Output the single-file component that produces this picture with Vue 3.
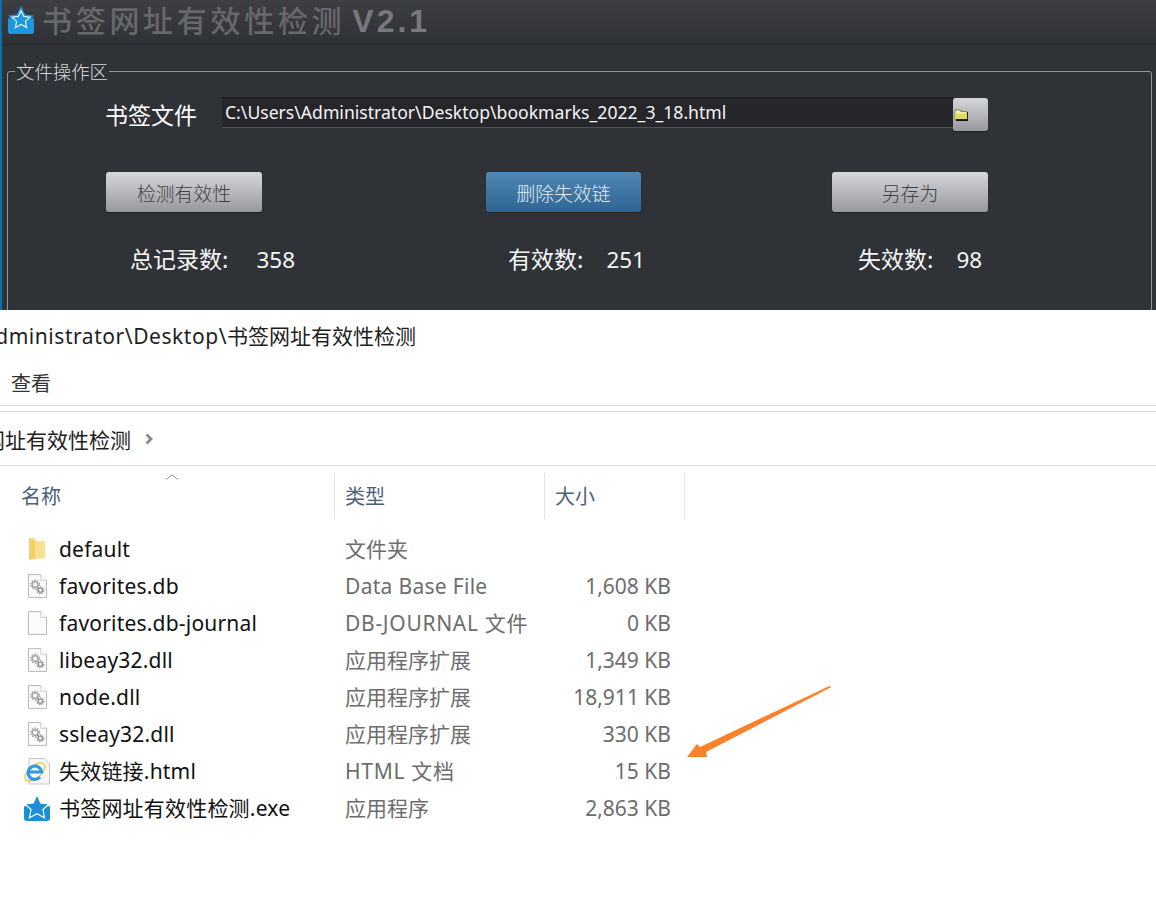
<script setup>
const files = [
  { name: 'default', type: '文件夹', size: '', icon: 'folder' },
  { name: 'favorites.db', type: 'Data Base File', size: '1,608 KB', icon: 'gear', track: 'latin' },
  { name: 'favorites.db-journal', type: 'DB-JOURNAL 文件', size: '0 KB', icon: 'blank', track: 'wide' },
  { name: 'libeay32.dll', type: '应用程序扩展', size: '1,349 KB', icon: 'gear' },
  { name: 'node.dll', type: '应用程序扩展', size: '18,911 KB', icon: 'gear' },
  { name: 'ssleay32.dll', type: '应用程序扩展', size: '330 KB', icon: 'gear' },
  { name: '失效链接.html', type: 'HTML 文档', size: '15 KB', icon: 'ie', track: 'wide' },
  { name: '书签网址有效性检测.exe', type: '应用程序', size: '2,863 KB', icon: 'star' }
]

const stats = [
  { label: '总记录数:', value: '358' },
  { label: '有效数:', value: '251' },
  { label: '失效数:', value: '98' }
]
</script>

<template>
  <div class="page">
    <section class="tool">
      <header class="title-bar">
        <svg class="app-icon" viewBox="0 0 30 30">
          <path d="M1 13h28v14a3 3 0 0 1-3 3H4a3 3 0 0 1-3-3z" fill="#1b98e0" />
          <path d="M15 0l4.500 9 9.500 1.200-7 6.400 2 9.600L15 21.500 6 26.200l2-9.600-7-6.400L10.500 9z" fill="#1b98e0" />
          <path d="M15 5l3 6.200 6.600.8-4.900 4.500 1.300 6.600-6-3.300-6 3.300 1.300-6.600L5.400 12l6.600-.8z" fill="#1b98e0" stroke="#dff1fb" stroke-width="1.300" />
        </svg>
        <h1 class="title">书签网址有效性检测<span class="version">V2.1</span></h1>
      </header>

      <fieldset class="group">
        <legend>文件操作区</legend>
        <div class="file-row">
          <label class="file-label">书签文件</label>
          <div class="file-input">C:\Users\Administrator\Desktop\bookmarks_2022_3_18.html</div>
          <button class="browse">
            <svg viewBox="0 0 16 14" width="16" height="14">
              <path d="M2 4V2.500h5L8 4h6v9H2z" fill="#111" />
              <path d="M1 3.500V2h5l1 1.500h6V11H1z" fill="#f3f3a0" stroke="#55552a" stroke-width=".6" />
              <path d="M1 5.500h12V11H1z" fill="#dede58" />
            </svg>
          </button>
        </div>
        <div class="actions">
          <button class="btn grey">检测有效性</button>
          <button class="btn blue">删除失效链</button>
          <button class="btn grey">另存为</button>
        </div>
        <div class="stats">
          <div v-for="s in stats" :key="s.label" class="stat">
            <span class="stat-label">{{ s.label }}</span>
            <span class="stat-value">{{ s.value }}</span>
          </div>
        </div>
      </fieldset>
    </section>

    <section class="explorer">
      <div class="path-bar"><span><span class="path-latin">Administrator\Desktop\</span>书签网址有效性检测</span></div>
      <div class="menu-bar">查看</div>
      <div class="crumb-bar">
        <div class="crumb-clip"><span>书签网址有效性检测</span></div>
        <svg class="crumb-arrow" viewBox="0 0 8 12" width="8" height="12">
          <path d="M1.500 1.500L6 6l-4.500 4.500" fill="none" stroke="#8a8a8a" stroke-width="2.800" />
        </svg>
      </div>

      <div class="list-head">
        <svg class="sort" viewBox="0 0 12 6" width="12" height="6">
          <path d="M.5 5.500L6 .8l5.500 4.700" fill="none" stroke="#8d8d8d" />
        </svg>
        <div class="col col-name">名称</div>
        <div class="col col-type">类型</div>
        <div class="col col-size">大小</div>
      </div>

      <ul class="files">
        <li v-for="f in files" :key="f.name" class="file">
          <span class="icon-cell">
            <svg v-if="f.icon === 'folder'" viewBox="0 0 18 24" width="18" height="24">
              <path d="M1 1h6l1 3h9v17l-16 2z" fill="#fbe08f" />
              <path d="M1 1l6 3v17l-6 2z" fill="#f6ce6c" />
            </svg>
            <svg v-else-if="f.icon === 'star'" viewBox="0 0 30 28" width="28" height="26">
              <path d="M1 12h28v13a3 3 0 0 1-3 3H4a3 3 0 0 1-3-3z" fill="#1b8fd6" />
              <path d="M15 0l4 8.500 9 1.100-6.600 6 1.800 9L15 20.200 6.800 24.600l1.800-9-6.600-6 9-1.100z" fill="#1b8fd6" stroke="#fff" stroke-width="1.200" />
              <path d="M15 1.500l2.800 6.500H12.200z" fill="#1b8fd6" />
            </svg>
            <svg v-else-if="f.icon === 'ie'" viewBox="0 0 28 28" width="28" height="28">
              <path d="M6 1.500h15l5.500 5.500v20H6z" fill="#f7f7f7" stroke="#c9c9c9" />
              <ellipse cx="12" cy="15" rx="12" ry="6" transform="rotate(-40 12 15)" fill="none" stroke="#f0c94a" stroke-width="1.400" />
              <path d="M5.500 15h13a6.700 6.700 0 1 0-1.500 5" fill="none" stroke="#2e9be0" stroke-width="3.200" />
            </svg>
            <svg v-else viewBox="0 0 20 25" width="19" height="24">
              <path d="M.5.5h13l6 6v18H.5z" fill="#fbfbfb" stroke="#b5b5b5" />
              <path d="M13.500.5v6h6" fill="#fff" stroke="#c9c9c9" />
              <g v-if="f.icon === 'gear'" fill="none" stroke="#a4a6a8">
                <circle cx="7.500" cy="11" r="3" stroke-width="1.600" />
                <circle cx="7.500" cy="11" r="4.600" stroke-width="1.500" stroke-dasharray="1.600 1.300" />
                <circle cx="13" cy="17" r="2.200" stroke="#8d8f91" stroke-width="1.400" />
                <circle cx="13" cy="17" r="3.600" stroke="#8d8f91" stroke-width="1.300" stroke-dasharray="1.500 1.200" />
              </g>
            </svg>
          </span>
          <span class="file-name">{{ f.name }}</span>
          <span class="file-type" :class="f.track">{{ f.type }}</span>
          <span class="file-size">{{ f.size }}</span>
        </li>
      </ul>

      <!-- 标注箭头 -->
      <svg class="callout" viewBox="0 0 150 76" width="150" height="76">
        <path d="M1 72L11 59 14 62 144 .8 145 2.200 20 67 21 72z" fill="#fb8229" />
      </svg>
    </section>
  </div>
</template>

<style scoped>
.page {
  width: 1156px;
  height: 905px;
  overflow: hidden;
  background: #fff;
  font-family: "Noto Sans", "Noto Sans CJK SC", sans-serif;
}

.tool {
  height: 310px;
  overflow: hidden;
  box-sizing: border-box;
  background: #2f3237;
  border-left: 2px solid #0f6fa8;
  color: #fff;
}

.title-bar {
  display: flex;
  align-items: center;
  gap: 7px;
  height: 45px;
  padding: 0 0 4px 5px;
  box-sizing: border-box;
  border-bottom: 1px solid #232529;
  background: linear-gradient(#3d3f43, #2f3136);
}

.app-icon {
  width: 28px;
  height: 28px;
  flex: none;
}

.title {
  margin: 0;
  font-family: "Noto Sans CJK SC", sans-serif;
  font-size: 30px;
  font-weight: 500;
  letter-spacing: 3.7px;
  line-height: 36px;
  color: #66686b;
  white-space: nowrap;
}

.version {
  margin-left: 7px;
  font-family: "Liberation Sans", sans-serif;
  font-size: 32px;
  font-weight: 700;
  letter-spacing: 3px;
  color: #77797c;
}

.group {
  box-sizing: border-box;
  width: 1145px;
  height: 300px;
  margin: 15px 0 0 5px;
  padding: 0;
  border: 1px solid #92959a;
  border-radius: 3px;
  min-inline-size: 0;
}

.group legend {
  margin-left: 7px;
  padding: 0 1px;
  font-family: "Noto Sans CJK SC", sans-serif;
  font-size: 18.400px;
  font-weight: 300;
  line-height: 22px;
  color: #d8d9da;
}

.file-row {
  display: flex;
  align-items: flex-start;
  height: 34px;
  margin-top: 15px;
  padding-left: 97px;
}

.file-label {
  width: 117px;
  font-family: "Noto Sans CJK SC", sans-serif;
  font-size: 23px;
  line-height: 34px;
}

.file-input {
  box-sizing: border-box;
  width: 731px;
  height: 31px;
  padding-left: 3px;
  background: #24262a;
  border-top: 1px solid #1d1e21;
  border-bottom: 1px solid #50535a;
  font-size: 17.600px;
  line-height: 29px;
  color: #f4f4f4;
  white-space: nowrap;
}

.browse {
  display: flex;
  align-items: center;
  width: 35px;
  height: 33px;
  margin-top: 1px;
  padding: 0 0 0 1px;
  border: none;
  border-radius: 3px;
  background: linear-gradient(#d5d6d8, #96989c);
  box-shadow: 0 1px 0 rgba(0, 0, 0, .3);
}

.actions {
  display: grid;
  grid-template-columns: 380px 346px 156px;
  margin-top: 41px;
  padding-left: 98px;
}

.btn {
  height: 40px;
  padding: 0;
  border: none;
  border-radius: 3px;
  font-family: "Noto Sans CJK SC", sans-serif;
  font-size: 18.800px;
  font-weight: 300;
  box-shadow: 0 1px 1px rgba(0, 0, 0, .35);
}

.actions .btn:nth-child(1) {
  width: 156px;
}

.actions .btn:nth-child(2) {
  width: 155px;
}

.grey {
  background: linear-gradient(#d6d7d9, #98999d);
  color: #3e4044;
}

.blue {
  background: linear-gradient(#4f88b4, #2f6594);
  color: #e3ecf3;
}

.stats {
  display: grid;
  grid-template-columns: 378px 350px auto;
  margin-top: 28px;
  padding-left: 122px;
  font-size: 22.500px;
  line-height: 36px;
  color: #f5f5f5;
}

.stat {
  display: flex;
  align-items: baseline;
}

.stat-label {
  margin-right: 23px;
  font-family: "Noto Sans CJK SC", sans-serif;
  font-size: 23px;
}

.stat:first-child .stat-label {
  margin-right: 28px;
}

.explorer {
  position: relative;
  height: 595px;
  color: #1e1e1e;
}

.path-bar {
  display: flex;
  justify-content: flex-end;
  width: 416px;
  height: 52px;
  overflow: hidden;
  font-size: 21px;
  line-height: 52px;
  white-space: nowrap;
}

.path-latin {
  letter-spacing: .55px;
}

.menu-bar {
  box-sizing: border-box;
  height: 44px;
  padding-left: 11px;
  border-bottom: 1px solid #dcdcdc;
  font-size: 20px;
  line-height: 44px;
  color: #333;
}

.crumb-bar {
  display: flex;
  align-items: center;
  gap: 13px;
  box-sizing: border-box;
  height: 55px;
  margin-top: 5px;
  border-top: 1px solid #dcdcdc;
  border-bottom: 1px solid #dcdcdc;
  font-size: 21px;
}

.crumb-clip {
  display: flex;
  justify-content: flex-end;
  width: 131px;
  overflow: hidden;
  white-space: nowrap;
}

.crumb-arrow {
  margin-left: 1px;
}

.list-head {
  position: relative;
  display: flex;
  height: 46px;
  margin-top: 7px;
  font-size: 20px;
  line-height: 48px;
  color: #4c607a;
}

.sort {
  position: absolute;
  top: 1px;
  left: 166px;
}

.col {
  box-sizing: border-box;
  border-right: 1px solid #e5e5e5;
}

.col-name {
  width: 335px;
  padding-left: 21px;
}

.col-type {
  width: 210px;
  padding-left: 10px;
}

.col-size {
  width: 140px;
  padding-left: 10px;
}

.files {
  list-style: none;
  margin: 11px 0 0;
  padding: 0;
}

.file {
  display: flex;
  align-items: center;
  height: 37px;
  font-size: 21px;
  line-height: 28px;
}

.icon-cell {
  display: flex;
  justify-content: center;
  width: 24px;
  margin-left: 25px;
  margin-right: 10px;
}

.icon-cell svg {
  flex: none;
}

.file-name {
  width: 286px;
  letter-spacing: .2px;
  white-space: nowrap;
  color: #111;
}

.file-type {
  width: 227px;
  color: #6d6d6d;
  white-space: nowrap;
}

.file-type.latin {
  letter-spacing: .3px;
}

.file-type.wide {
  letter-spacing: .7px;
}

.file-size {
  width: 99px;
  text-align: right;
  color: #6d6d6d;
  white-space: nowrap;
}

.callout {
  position: absolute;
  top: 375px;
  left: 686px;
}
</style>

<style>
html, body {
  margin: 0;
  background: #fff;
}
</style>
